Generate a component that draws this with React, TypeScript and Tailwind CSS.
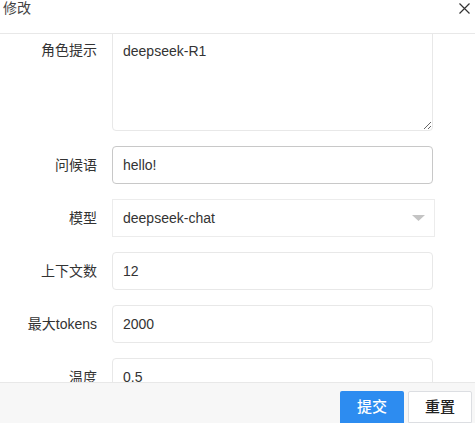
import React from "react";

const font = { fontFamily: '"Liberation Sans", "Noto Sans CJK SC", sans-serif' };

function Row({ label, children }: { label: string; children: React.ReactNode }) {
  return (
    <div className="flex items-center shrink-0">
      <div className="w-[97px] text-right text-[14px] leading-[20px] text-[#333]">{label}</div>
      <div className="ml-[15px]">{children}</div>
    </div>
  );
}

function Input({ value, dark }: { value: string; dark?: boolean }) {
  return (
    <div
      className={`w-[321px] h-[38px] rounded-[4px] border ${dark ? "border-[#c8c8c8]" : "border-[#e8e8e8]"} bg-white pl-[10px] flex items-center text-[14px] text-[#333]`}
    >
      {value}
    </div>
  );
}

export default function App() {
  return (
    <div style={font} className="w-[475px] h-[423px] bg-white flex flex-col overflow-hidden">
      <div className="h-[34px] shrink-0 border-b border-[#e8e8e8] flex items-start justify-between pl-[3px] relative">
        <span className="text-[14px] leading-[16px] text-[#444]">修改</span>
        <svg className="absolute left-[459px] top-[3px]" width="11" height="11" viewBox="0 0 11 11">
          <path d="M0.5 0.5 L10.5 10.5 M10.5 0.5 L0.5 10.5" stroke="#333" strokeWidth="1.2" fill="none" />
        </svg>
      </div>
      <div className="flex-1 overflow-hidden flex flex-col gap-[15px]">
        <div className="flex items-start shrink-0 -mt-[1px]">
          <div className="w-[97px] text-right text-[14px] leading-[20px] text-[#333] pt-[7px]">角色提示</div>
          <textarea
            readOnly
            defaultValue="deepseek-R1"
            className="ml-[15px] w-[321px] h-[98px] rounded-b-[4px] border border-[#e8e8e8] pl-[10px] pt-[7px] text-[14px] leading-[20px] text-[#333] outline-none"
            style={font}
          />
        </div>
        <Row label="问候语">
          <Input value="hello!" dark />
        </Row>
        <Row label="模型">
          <div className="w-[323px] h-[38px] border border-[#ececec] bg-white pl-[10px] pr-[9px] flex items-center justify-between text-[14px] text-[#333]">
            <span>deepseek-chat</span>
            <svg width="13" height="6" viewBox="0 0 13 6">
              <path d="M0 0 L13 0 L6.5 6 Z" fill="#c4c4c4" />
            </svg>
          </div>
        </Row>
        <Row label="上下文数">
          <Input value="12" />
        </Row>
        <Row label="最大tokens">
          <Input value="2000" />
        </Row>
        <Row label="温度">
          <Input value="0.5" />
        </Row>
      </div>
      <div className="h-[41px] shrink-0 border-t border-[#e8e8e8] bg-[#f7f7f7] flex justify-end items-start pt-[8px] pr-[3px] gap-[4px]">
        <button className="w-[64px] h-[32px] bg-[#2d8cf0] text-white text-[15px] font-medium rounded-t-[2px]">提交</button>
        <button className="w-[64px] h-[32px] bg-white border border-[#dcdee2] text-[#222] text-[15px] font-medium rounded-t-[2px]">重置</button>
      </div>
    </div>
  );
}
